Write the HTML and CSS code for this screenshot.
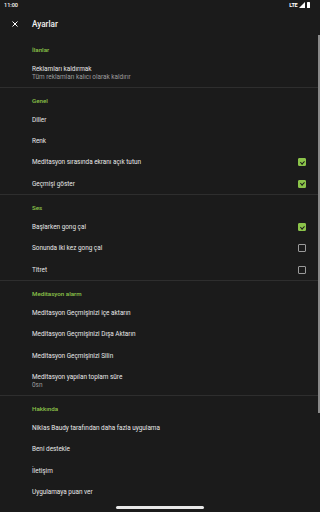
FILE: index.html
```html
<!DOCTYPE html>
<html lang="tr">
<head>
    <meta charset="UTF-8">
    <meta name="viewport" content="width=device-width, initial-scale=1.0">
    <title>Ayarlar</title>
    <link rel="stylesheet" href="styles.css">
</head>
<body>

    <div class="screen">
        <!-- Status bar -->
        <div class="status-bar">
            <span class="time">11:00</span>
            <div class="status-icons">
                <span class="lte">LTE</span>
                <svg class="signal" width="6" height="6" viewBox="0 0 6 6"><path d="M6 0 L6 6 L0 6 Z" fill="#fff"/></svg>
                <span class="battery"></span>
            </div>
        </div>

        <!-- Toolbar -->
        <div class="toolbar">
            <svg class="close-icon" width="6" height="6" viewBox="0 0 6 6">
                <path d="M0.5 0.5 L5.5 5.5 M5.5 0.5 L0.5 5.5" stroke="#fff" stroke-width="1" fill="none"/>
            </svg>
            <span class="title">Ayarlar</span>
        </div>

        <div class="list">
            <div class="section first">
                <div class="section-title">İlanlar</div>
                <div class="row two-line">
                    <div class="row-title">Reklamları kaldırmak</div>
                    <div class="row-sub">Tüm reklamları kalıcı olarak kaldırır</div>
                </div>
            </div>

            <div class="section">
                <div class="section-title">Genel</div>
                <div class="row"><span>Diller</span></div>
                <div class="row"><span>Renk</span></div>
                <div class="row"><span>Meditasyon sırasında ekranı açık tutun</span><span class="check on"></span></div>
                <div class="row"><span>Geçmişi göster</span><span class="check on"></span></div>
            </div>

            <div class="section">
                <div class="section-title">Ses</div>
                <div class="row"><span>Başlarken gong çal</span><span class="check on"></span></div>
                <div class="row"><span>Sonunda iki kez gong çal</span><span class="check"></span></div>
                <div class="row"><span>Titret</span><span class="check"></span></div>
            </div>

            <div class="section">
                <div class="section-title">Meditasyon alarm</div>
                <div class="row"><span>Meditasyon Geçmişinizi içe aktarın</span></div>
                <div class="row"><span>Meditasyon Geçmişinizi Dışa Aktarın</span></div>
                <div class="row"><span>Meditasyon Geçmişinizi Silin</span></div>
                <div class="row two-line">
                    <div class="row-title">Meditasyon yapılan toplam süre</div>
                    <div class="row-sub">0sn</div>
                </div>
            </div>

            <div class="section last">
                <div class="section-title">Hakkında</div>
                <div class="row"><span>Niklas Baudy tarafından daha fazla uygulama</span></div>
                <div class="row"><span>Beni destekle</span></div>
                <div class="row"><span>İletişim</span></div>
                <div class="row"><span>Uygulamaya puan ver</span></div>
            </div>
        </div>

        <!-- overlays -->
        <div class="scrollbar"></div>
        <div class="nav-handle"></div>
    </div>

</body>
</html>
```

FILE: styles.css
```css
/* General Styles */
body {
    margin: 0;
    background: #1b1b1b;
    font-family: Roboto, "Noto Sans", sans-serif;
}

.screen {
    position: relative;
    width: 320px;
    height: 512px;
    overflow: hidden;
    background: #1b1b1b;
    color: #e8e8e8;
}

/* Status bar */
.status-bar {
    height: 10px;
    display: flex;
    align-items: center;
    justify-content: space-between;
    padding: 0 10px 0 4px;
}

.time {
    font-size: 5.5px;
    font-weight: 500;
    color: #fff;
}

.status-icons {
    display: flex;
    align-items: center;
    gap: 1.5px;
}

.lte {
    font-size: 5.5px;
    font-weight: 700;
    color: #fff;
    letter-spacing: -0.2px;
}

.battery {
    width: 3.5px;
    height: 6px;
    background: #fff;
    border-radius: 0.5px;
}

/* Toolbar */
.toolbar {
    height: 27px;
    display: flex;
    align-items: center;
    padding-left: 11.5px;
}

.close-icon {
    margin-right: 14.5px;
}

.title {
    font-size: 8.2px;
    font-weight: 500;
    color: #f2f2f2;
}

/* List */
.section {
    border-bottom: 1px solid #2e2e2e;
}

.section.last {
    border-bottom: none;
}

.section-title {
    padding: 9px 0 4px 32px;
    line-height: 8px;
    font-size: 6.2px;
    font-weight: 500;
    color: #8bc34a;
}

.row {
    height: 21.35px;
    display: flex;
    align-items: center;
    justify-content: space-between;
    padding: 0 14px 0 32px;
    font-size: 6.4px;
    color: #e8e8e8;
}

.row.two-line {
    height: auto;
    display: block;
    padding-top: 6.5px;
    padding-bottom: 6.5px;
}

.row-title {
    line-height: 8px;
}

.row-sub {
    line-height: 8px;
    color: #9e9e9e;
}

/* Checkboxes */
.check {
    width: 6px;
    height: 6px;
    border: 1.2px solid #9a9a9a;
    border-radius: 1px;
    position: relative;
}

.check.on {
    background: #8bc34a;
    border-color: #8bc34a;
}

.check.on::after {
    content: "";
    position: absolute;
    left: 1.5px;
    top: 0.5px;
    width: 1.5px;
    height: 3px;
    border: solid #1b1b1b;
    border-width: 0 1px 1px 0;
    transform: rotate(45deg);
}

/* Overlays */
.scrollbar {
    position: absolute;
    right: 0;
    top: 35px;
    width: 2.5px;
    height: 378px;
    background: #8a8a8a;
}

.nav-handle {
    position: absolute;
    left: 116px;
    top: 506px;
    width: 88px;
    height: 2.5px;
    border-radius: 2px;
    background: #e8e8e8;
}
```
